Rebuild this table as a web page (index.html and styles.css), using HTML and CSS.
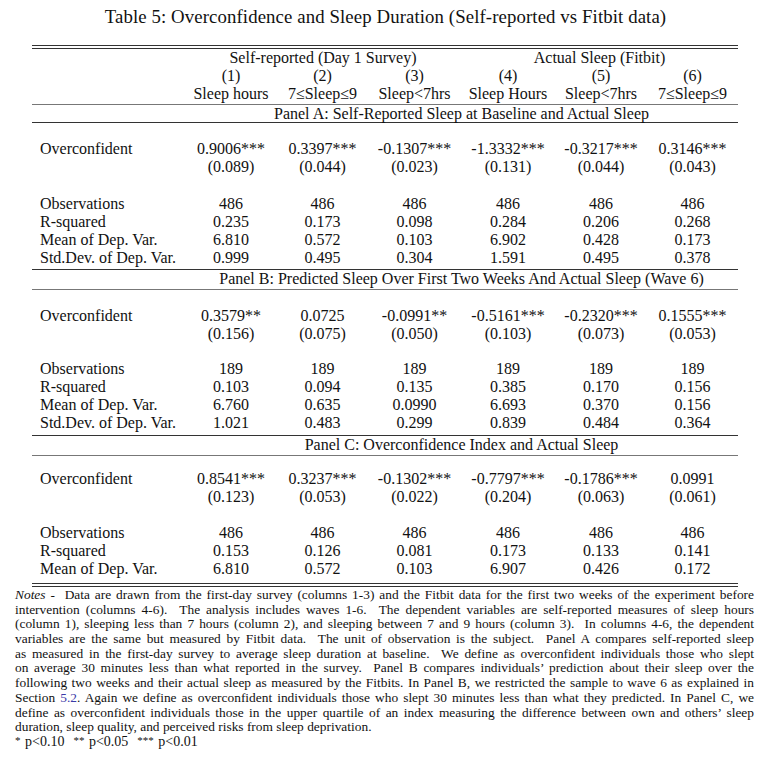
FILE: index.html
```html
<!DOCTYPE html>
<html lang="en">
<head>
<meta charset="utf-8">
<title>Table 5</title>
<link rel="stylesheet" href="styles.css">
</head>
<body>
<h1 class="title">Table 5: Overconfidence and Sleep Duration (Self-reported vs Fitbit data)</h1>

<div class="table">
  <div class="rule top"></div>
  <div class="rule top second"></div>

  <div class="row first">
    <span></span>
    <span class="span3">Self-reported (Day 1 Survey)</span>
    <span class="span3">Actual Sleep (Fitbit)</span>
  </div>
  <div class="row">
    <span></span><span>(1)</span><span>(2)</span><span>(3)</span><span>(4)</span><span>(5)</span><span>(6)</span>
  </div>
  <div class="row short">
    <span></span><span>Sleep hours</span><span>7≤Sleep≤9</span><span>Sleep&lt;7hrs</span><span>Sleep Hours</span><span>Sleep&lt;7hrs</span><span>7≤Sleep≤9</span>
  </div>

  <div class="rule light"></div>
  <div class="row panel"><span></span><span class="span6">Panel A: Self-Reported Sleep at Baseline and Actual Sleep</span></div>
  <div class="rule"></div>

  <div class="row coef">
    <span class="lab">Overconfident</span><span>0.9006***</span><span>0.3397***</span><span>-0.1307***</span><span>-1.3332***</span><span>-0.3217***</span><span>0.3146***</span>
  </div>
  <div class="row">
    <span></span><span>(0.089)</span><span>(0.044)</span><span>(0.023)</span><span>(0.131)</span><span>(0.044)</span><span>(0.043)</span>
  </div>
  <div class="row stats wide">
    <span class="lab">Observations</span><span>486</span><span>486</span><span>486</span><span>486</span><span>486</span><span>486</span>
  </div>
  <div class="row">
    <span class="lab">R-squared</span><span>0.235</span><span>0.173</span><span>0.098</span><span>0.284</span><span>0.206</span><span>0.268</span>
  </div>
  <div class="row">
    <span class="lab">Mean of Dep. Var.</span><span>6.810</span><span>0.572</span><span>0.103</span><span>6.902</span><span>0.428</span><span>0.173</span>
  </div>
  <div class="row">
    <span class="lab">Std.Dev. of Dep. Var.</span><span>0.999</span><span>0.495</span><span>0.304</span><span>1.591</span><span>0.495</span><span>0.378</span>
  </div>

  <div class="rule dark gap"></div>
  <div class="row panel"><span></span><span class="span6">Panel B: Predicted Sleep Over First Two Weeks And Actual Sleep (Wave 6)</span></div>
  <div class="rule light"></div>

  <div class="row coef">
    <span class="lab">Overconfident</span><span>0.3579**</span><span>0.0725</span><span>-0.0991**</span><span>-0.5161***</span><span>-0.2320***</span><span>0.1555***</span>
  </div>
  <div class="row">
    <span></span><span>(0.156)</span><span>(0.075)</span><span>(0.050)</span><span>(0.103)</span><span>(0.073)</span><span>(0.053)</span>
  </div>
  <div class="row stats narrow">
    <span class="lab">Observations</span><span>189</span><span>189</span><span>189</span><span>189</span><span>189</span><span>189</span>
  </div>
  <div class="row">
    <span class="lab">R-squared</span><span>0.103</span><span>0.094</span><span>0.135</span><span>0.385</span><span>0.170</span><span>0.156</span>
  </div>
  <div class="row">
    <span class="lab">Mean of Dep. Var.</span><span>6.760</span><span>0.635</span><span>0.0990</span><span>6.693</span><span>0.370</span><span>0.156</span>
  </div>
  <div class="row">
    <span class="lab">Std.Dev. of Dep. Var.</span><span>1.021</span><span>0.483</span><span>0.299</span><span>0.839</span><span>0.484</span><span>0.364</span>
  </div>

  <div class="rule dark gap wider"></div>
  <div class="row panel"><span></span><span class="span6">Panel C: Overconfidence Index and Actual Sleep</span></div>
  <div class="rule light"></div>

  <div class="row coef tight">
    <span class="lab">Overconfident</span><span>0.8541***</span><span>0.3237***</span><span>-0.1302***</span><span>-0.7797***</span><span>-0.1786***</span><span>0.0991</span>
  </div>
  <div class="row">
    <span></span><span>(0.123)</span><span>(0.053)</span><span>(0.022)</span><span>(0.204)</span><span>(0.063)</span><span>(0.061)</span>
  </div>
  <div class="row stats">
    <span class="lab">Observations</span><span>486</span><span>486</span><span>486</span><span>486</span><span>486</span><span>486</span>
  </div>
  <div class="row">
    <span class="lab">R-squared</span><span>0.153</span><span>0.126</span><span>0.081</span><span>0.173</span><span>0.133</span><span>0.141</span>
  </div>
  <div class="row">
    <span class="lab">Mean of Dep. Var.</span><span>6.810</span><span>0.572</span><span>0.103</span><span>6.907</span><span>0.426</span><span>0.172</span>
  </div>

  <div class="rule bottom"></div>
  <div class="rule bottom second"></div>
</div>

<div class="notes">
  <span class="line"><em>Notes</em> - &nbsp;Data are drawn from the first-day survey (columns 1-3) and the Fitbit data for the first two weeks of the experiment before</span>
  <span class="line">intervention (columns 4-6). &nbsp;The analysis includes waves 1-6. &nbsp;The dependent variables are self-reported measures of sleep hours</span>
  <span class="line">(column 1), sleeping less than 7 hours (column 2), and sleeping between 7 and 9 hours (column 3). &nbsp;In columns 4-6, the dependent</span>
  <span class="line">variables are the same but measured by Fitbit data. &nbsp;The unit of observation is the subject. &nbsp;Panel A compares self-reported sleep</span>
  <span class="line">as measured in the first-day survey to average sleep duration at baseline. &nbsp;We define as overconfident individuals those who slept</span>
  <span class="line">on average 30 minutes less than what reported in the survey. &nbsp;Panel B compares individuals’ prediction about their sleep over the</span>
  <span class="line">following two weeks and their actual sleep as measured by the Fitbits. In Panel B, we restricted the sample to wave 6 as explained in</span>
  <span class="line">Section <span class="ref">5.2</span>. Again we define as overconfident individuals those who slept 30 minutes less than what they predicted. In Panel C, we</span>
  <span class="line">define as overconfident individuals those in the upper quartile of an index measuring the difference between own and others’ sleep</span>
  <span class="line last">duration, sleep quality, and perceived risks from sleep deprivation.</span>
  <span class="line last pvals"><sup>*</sup> p&lt;0.10 &nbsp;<sup>**</sup> p&lt;0.05 &nbsp;<sup>***</sup> p&lt;0.01</span>
</div>
</body>
</html>
```

FILE: styles.css
```css
html, body {
  margin: 0;
  padding: 0;
  background: #fff;
  color: #111;
  font-family: "Liberation Serif", "Times New Roman", serif;
}

.title {
  margin: 0;
  padding-top: 5px;
  height: 40px;
  font-size: 18.8px;
  line-height: 24px;
  font-weight: normal;
  text-align: center;
  letter-spacing: 0.1px;
}

.table {
  width: 706px;
  margin-left: 32px;
  font-size: 16px;
}

.rule {
  height: 0;
  border-top: 1px solid #333;
}

.rule.top.second,
.rule.bottom.second {
  margin-top: 2px;
}

.rule.light {
  border-top-color: #777;
  margin-top: 2px;
}

.rule.dark {
  border-top-color: #333;
}

.rule.gap {
  margin-top: 2px;
}

.rule.gap.wider {
  margin-top: 3px;
}

.rule.bottom {
  margin-top: 5px;
}

.row {
  display: grid;
  grid-template-columns: 153px 92px 91px 93px 94px 92px 91px;
  height: 18px;
  line-height: 18px;
  text-align: center;
  white-space: nowrap;
}

.row.short {
  height: 17px;
}

.row.panel {
  height: 17px;
  line-height: 17px;
}

.row.coef {
  margin-top: 17px;
}

.row.coef.tight {
  margin-top: 14px;
}

.row.stats {
  margin-top: 18px;
}

.row.stats.wide {
  margin-top: 19px;
}

.row.stats.narrow {
  margin-top: 17px;
}

.row .lab {
  text-align: left;
  padding-left: 8px;
}

.span3 {
  grid-column: span 3;
}

.span6 {
  grid-column: span 6;
}

.notes {
  width: 739px;
  margin: 1px 0 0 15px;
  font-size: 13.4px;
  line-height: 14.7px;
}

.notes .line {
  display: block;
  height: 14.7px;
  white-space: nowrap;
  text-align: justify;
  text-align-last: justify;
}

.notes .line.last {
  text-align-last: left;
}

.notes .ref {
  color: #3a3aa8;
}

.notes sup {
  font-size: 11px;
  line-height: 0;
  vertical-align: 2px;
}

.notes .pvals {
  font-size: 14px;
  word-spacing: 1px;
}
```
